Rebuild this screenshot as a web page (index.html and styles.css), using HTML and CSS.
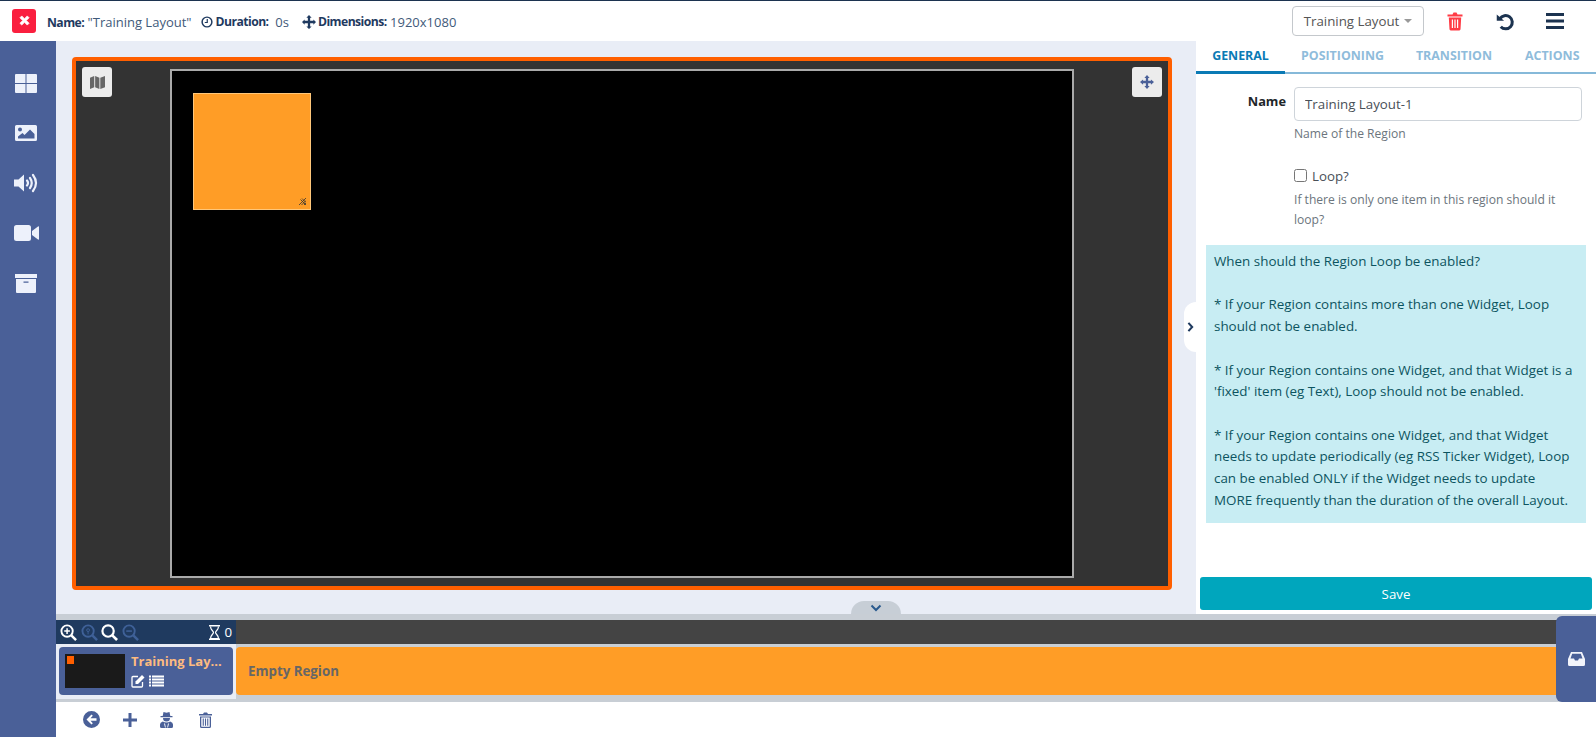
FILE: index.html
```html
<!DOCTYPE html>
<html lang="en">
<head>
<meta charset="utf-8">
<title>Layout Editor</title>
<link rel="stylesheet" href="styles.css">
</head>
<body>
<header class="topbar">
  <button class="close-btn" aria-label="Close"><svg viewBox="0 0 12 12" width="11" height="11"><path d="M3 1 6 4 9 1 11 3 8 6 11 9 9 11 6 8 3 11 1 9 4 6 1 3Z" fill="#fff" stroke="#fff" stroke-width=".8" stroke-linejoin="round"/></svg></button>
  <div class="meta">
    <span><b>Name:</b> "Training Layout"</span>
    <span class="meta-item"><svg class="mi" viewBox="0 0 14 14" width="12" height="12"><circle cx="7" cy="7" r="5.7" fill="none" stroke="#1f3a5f" stroke-width="1.7"/><path d="M7.3 3.5V7.6H4.4" fill="none" stroke="#1f3a5f" stroke-width="1.4"/></svg><b>Duration:</b>&nbsp; 0s</span>
    <span class="meta-item wide"><svg class="mi" viewBox="0 0 16 16" width="14" height="14"><path d="M8 0 11 3H9.300V6.700H13V5L16 8 13 11V9.300H9.300V13H11L8 16 5 13H6.700V9.300H3V11L0 8 3 5V6.700H6.700V3H5Z" fill="#1f3a5f"/></svg><b>Dimensions:</b> 1920x1080</span>
  </div>
  <div class="top-actions">
    <button class="select-btn">Training Layout <i class="caret"></i></button>
    <svg class="trash-top" viewBox="0 0 16 19" width="16" height="19"><path d="M5.500 2.500 6.500.5H9.500L10.500 2.500H15.500V4.500H.5V2.500ZM1.800 5.500H14.200L13.500 17.500 12.500 18.500H3.500L2.500 17.500ZM4.800 7.500V16H6V7.500ZM7.400 7.500V16H8.600V7.500ZM10 7.500V16H11.200V7.500Z" fill="#ff3b45" fill-rule="evenodd"/></svg>
    <svg class="undo" viewBox="0 0 20 20" width="19" height="19"><path d="M4.200 7A7 7 0 1 1 5 15.500" fill="none" stroke="#1c3350" stroke-width="3.200"/><path d="M.8 2.600 8.500 9.300H.8Z" fill="#1c3350"/></svg>
    <svg class="burger" viewBox="0 0 18 16" width="18" height="16"><path d="M0 0H18V3H0ZM0 6.500H18V9.500H0ZM0 13H18V16H0Z" fill="#1c3350"/></svg>
  </div>
</header>

<div class="shell">
  <nav class="sidebar">
    <span class="nav-slot"><svg viewBox="0 0 22 19" width="22" height="19"><path d="M0 1Q0 0 1 0H10.500V9H0ZM11.500 0H21Q22 0 22 1V9H11.500ZM0 10H10.500V19H1Q0 19 0 18ZM11.500 10H22V18Q22 19 21 19H11.500Z" fill="#edf1fb"/></svg></span>
    <span class="nav-slot"><svg viewBox="0 0 22 16" width="22" height="16"><path fill-rule="evenodd" d="M1.500 0H20.500Q22 0 22 1.500V14.500Q22 16 20.500 16H1.500Q0 16 0 14.500V1.500Q0 0 1.500 0ZM5 2.500A2 2 0 1 0 5 6.500 2 2 0 1 0 5 2.500ZM3 13.500H19.500V9L15 4.500 9.500 10 7.500 8 3 11.500Z" fill="#edf1fb"/></svg></span>
    <span class="nav-slot"><svg viewBox="0 0 25 20" width="25" height="20"><path d="M0 6.500H4.500L10 1.500V18.500L4.500 13.500H0Z" fill="#edf1fb"/><path d="M13 7.500Q15 10 13 12.500M16 5Q19.500 10 16 15M19 2Q25 10 19 18" fill="none" stroke="#edf1fb" stroke-width="2.200" stroke-linecap="round"/></svg></span>
    <span class="nav-slot"><svg viewBox="0 0 25 16" width="25" height="16"><path d="M2.500 0H14.500Q17 0 17 2.500V13.500Q17 16 14.500 16H2.500Q0 16 0 13.500V2.500Q0 0 2.500 0ZM18 6 24 1.500Q25 1 25 2V14Q25 15 24 14.500L18 10Z" fill="#edf1fb"/></svg></span>
    <span class="nav-slot"><svg viewBox="0 0 22 19" width="22" height="19"><path fill-rule="evenodd" d="M0 0H22V4H0ZM1 5H21V18Q21 19 20 19H2Q1 19 1 18ZM8.500 7.500V8.700H13.500V7.500Z" fill="#edf1fb"/></svg></span>
  </nav>

  <main class="workspace">
    <div class="upper">
      <section class="viewer">
        <div class="frame">
          <button class="tool tool-left" aria-label="Map"><svg viewBox="0 0 16 16" width="15" height="15"><path d="M0 3 4.500 1V13L0 15ZM5.500 1 10 3V15L5.500 13ZM11 3 16 1V13L11 15Z" fill="#666"/></svg></button>
          <button class="tool tool-right" aria-label="Move"><svg viewBox="0 0 16 16" width="14" height="14"><path d="M8 0 11 3.500H9.300V6.700H12.500V5L16 8 12.500 11V9.300H9.300V12.500H11L8 16 5 12.500H6.700V9.300H3.500V11L0 8 3.500 5V6.700H6.700V3.500H5Z" fill="#4a6098"/></svg></button>
          <div class="stage">
            <div class="region"><svg class="grip" viewBox="0 0 7 7" width="7" height="7"><path d="M0 7 7 0M2.500 7 7 2.500M5 7 7 5M1.500 1.500 7 7M3 .5 7 4.500" stroke="#333" stroke-width=".8"/></svg></div>
          </div>
        </div>
        <div class="collapse-down"><svg viewBox="0 0 12 8" width="12" height="8"><path d="M1.500 1.500 6 6 10.500 1.500" fill="none" stroke="#2a5a8e" stroke-width="2"/></svg></div>
      </section>

      <aside class="panel">
        <div class="panel-toggle"><svg viewBox="0 0 8 12" width="7" height="10"><path d="M1.500 1 6 6 1.500 11" fill="none" stroke="#1f3a5f" stroke-width="2.500"/></svg></div>
        <div class="tabs">
          <span class="tab active">GENERAL</span>
          <span class="tab">POSITIONING</span>
          <span class="tab">TRANSITION</span>
          <span class="tab">ACTIONS</span>
        </div>
        <div class="form">
          <div class="field">
            <label class="field-label">Name</label>
            <div class="field-body">
              <input class="text-input" type="text" value="Training Layout-1">
              <p class="hint">Name of the Region</p>
            </div>
          </div>
          <div class="field field-check">
            <div class="field-label"></div>
            <div class="field-body">
              <label class="check"><input type="checkbox"> Loop?</label>
              <p class="hint">If there is only one item in this region should it loop?</p>
            </div>
          </div>
          <div class="info">When should the Region Loop be enabled?<br><br>* If your Region contains more than one Widget, Loop should not be enabled.<br><br>* If your Region contains one Widget, and that Widget is a 'fixed' item (eg Text), Loop should not be enabled.<br><br>* If your Region contains one Widget, and that Widget needs to update periodically (eg RSS Ticker Widget), Loop can be enabled ONLY if the Widget needs to update MORE frequently than the duration of the overall Layout.</div>
        </div>
        <button class="save">Save</button>
      </aside>
    </div>

    <section class="timeline">
      <div class="ruler">
        <div class="zoom-tools">
          <svg viewBox="0 0 18 18" width="17" height="17"><circle cx="7.500" cy="7.500" r="6" fill="none" stroke="#fff" stroke-width="2"/><path d="M12 12 17 17" stroke="#fff" stroke-width="2.600"/><path d="M7.500 4.500V10.500M4.500 7.500H10.500" stroke="#fff" stroke-width="1.600"/></svg>
          <svg viewBox="0 0 18 18" width="17" height="17"><circle cx="7.500" cy="7.500" r="6" fill="none" stroke="#3f6198" stroke-width="2"/><path d="M12 12 17 17" stroke="#3f6198" stroke-width="2.600"/><circle cx="7.500" cy="6.500" r="1.500" fill="none" stroke="#3f6198"/><path d="M7.500 8V11" stroke="#3f6198"/></svg>
          <svg viewBox="0 0 18 18" width="17" height="17"><circle cx="7.500" cy="7.500" r="6" fill="none" stroke="#fff" stroke-width="2.300"/><path d="M12 12 17 17" stroke="#fff" stroke-width="2.800"/></svg>
          <svg viewBox="0 0 18 18" width="17" height="17"><circle cx="7.500" cy="7.500" r="6" fill="none" stroke="#3f6198" stroke-width="2"/><path d="M12 12 17 17" stroke="#3f6198" stroke-width="2.600"/><path d="M4.500 7.500H10.500" stroke="#3f6198" stroke-width="1.600"/></svg>
          <span class="count"><svg viewBox="0 0 12 15" width="13" height="15"><path d="M.5.800H11.500M.5 14.200H11.500" stroke="#fff" stroke-width="1.500"/><path d="M2 1.500C2 5 5 6 5 7.500S2 10 2 13.500H10C10 10 7 9 7 7.500S10 5 10 1.500" fill="none" stroke="#fff" stroke-width="1.200"/></svg><span>0</span></span>
        </div>
        <div class="ruler-fill"></div>
      </div>
      <div class="track">
        <div class="card-wrap">
          <div class="layout-card">
            <div class="thumb"><i></i></div>
            <div class="card-info">
              <div class="card-title">Training Lay...</div>
              <div class="card-icons">
                <svg viewBox="0 0 14 14" width="14" height="14"><path d="M11.500 8V12Q11.500 13 10.500 13H2Q1 13 1 12V3.500Q1 2.500 2 2.500H7" fill="none" stroke="#fff" stroke-width="1.300"/><path d="M4.500 7.500 11 1 13.500 3.500 7 10H4.500Z" fill="#fff"/></svg>
                <svg viewBox="0 0 15 12" width="15" height="12"><path d="M0 .5H2V2.500H0ZM3 .5H15V2.500H3ZM0 3.500H2V5.500H0ZM3 3.500H15V5.500H3ZM0 6.500H2V8.500H0ZM3 6.500H15V8.500H3ZM0 9.500H2V11.500H0ZM3 9.500H15V11.500H3Z" fill="#fff"/></svg>
              </div>
            </div>
          </div>
        </div>
        <div class="region-bar">Empty Region</div>
      </div>
      <button class="drawer" aria-label="Drawer"><svg viewBox="0 0 17 14" width="17" height="14"><path fill-rule="evenodd" d="M3 0H14L17 7V12.500Q17 14 15.500 14H1.500Q0 14 0 12.500V7ZM4.200 1.800 2.500 6.500H6L7 8.500H10L11 6.500H14.500L12.800 1.800Z" fill="#f2f4fb"/></svg></button>
    </section>

    <footer class="bottom">
      <svg viewBox="0 0 17 17" width="17" height="17"><path fill-rule="evenodd" d="M8.500 0A8.500 8.500 0 1 1 8.500 17 8.500 8.500 0 1 1 8.500 0ZM8.500 3.500 3.500 8.500 8.500 13.500 9.800 12.200 7.500 9.800H13.500V7.200H7.500L9.800 4.800Z" fill="#4a6098"/></svg>
      <svg viewBox="0 0 14 14" width="14" height="14"><path d="M5.500 0H8.500V5.500H14V8.500H8.500V14H5.500V8.500H0V5.500H5.500Z" fill="#4a6098"/></svg>
      <svg viewBox="0 0 13 16" width="13" height="16"><path fill-rule="evenodd" d="M3.500 0 6.500 .8 9.500 0 10.300 4H12.500V5.200H.5V4H2.700ZM3 6H10Q10 9.500 6.500 9.500T3 6ZM2.800 9.500Q4.500 10.500 6.500 10.500T10.200 9.500Q13 10.500 13 12.500V14.500Q13 16 11.500 16H1.500Q0 16 0 14.500V12.500Q0 10.500 2.800 9.500ZM4 11.500 5 15.500H5.800L5 11.500ZM8 11.500 7.200 15.500H8L9 11.500Z" fill="#4a6098"/></svg>
      <svg class="bottom-trash" viewBox="0 0 13 16" width="13" height="16"><path fill-rule="evenodd" d="M4 2 5 .5H8L9 2H13V3.500H0V2ZM1 4.500H12V14.500Q12 16 10.500 16H2.500Q1 16 1 14.500ZM2.300 5.500V14.700H10.700V5.500ZM3.700 6.500H4.800V13.700H3.700ZM5.950 6.500H7.050V13.700H5.950ZM8.200 6.500H9.300V13.700H8.200Z" fill="#4a6098"/></svg>
    </footer>
  </main>
</div>
</body>
</html>
```
FILE: styles.css
```css
* { box-sizing: border-box; }
html, body { margin: 0; height: 737px; overflow: hidden; }
body { font-family: "Open Sans", "Noto Sans", sans-serif; font-size: 13.3px; color: #212529; background: #fff; }
button { font-family: inherit; border: 0; padding: 0; }
svg { display: block; flex: none; }

.topbar { height: 41px; border-top: 1px solid #1c3350; display: flex; align-items: center; padding: 0 0 0 12px; background: #fff; }
.close-btn { width: 24px; height: 24px; border-radius: 3px; background: #fa1f3f; display: flex; align-items: center; justify-content: center; margin-bottom: 1px; }
.meta { display: flex; align-items: center; margin-left: 11px; color: #3f5a7a; font-size: 13px; margin-top: 1px; }
.meta b { color: #1f3a5f; font-weight: 700; font-size: 12.2px; letter-spacing: -.55px; }
.meta-item { display: flex; align-items: center; margin-left: 9px; white-space: pre; }
.meta-item.wide { margin-left: 13px; }
.mi { margin-right: 3px; }
.meta-item.wide .mi { margin-right: 2px; }
.top-actions { margin-left: auto; display: flex; align-items: center; padding-right: 32px; }
.select-btn { height: 30px; width: 132px; background: #fff; border: 1px solid #c4c8cc; border-radius: 4px; color: #555; font-size: 13.3px; display: flex; align-items: center; justify-content: center; gap: 5px; }
.caret { width: 0; height: 0; border-left: 4px solid transparent; border-right: 4px solid transparent; border-top: 4px solid #999; }
.trash-top { margin-left: 23px; }
.undo { margin-left: 33px; }
.burger { margin-left: 31px; }

.shell { display: flex; height: 696px; }
.sidebar { width: 56px; flex: none; background: #4a6098; display: flex; flex-direction: column; align-items: center; padding: 17px 4px 0 0; }
.nav-slot { height: 50px; display: flex; align-items: center; justify-content: center; }
.workspace { flex: 1; min-width: 0; display: flex; flex-direction: column; position: relative; }

.upper { display: flex; height: 573px; }
.viewer { width: 1140px; flex: none; background: #e9edf6; padding: 16px 24px 24px 16px; position: relative; }
.frame { height: 533px; width: 1100px; background: #333; border: 4px solid #ff5f00; border-radius: 4px; position: relative; padding: 8px 94px; }
.stage { height: 100%; background: #000; border: 2px solid #aaa; padding: 22px 21px; }
.region { width: 118px; height: 117px; background: #ff9d26; border: 1px solid #ffc77a; position: relative; }
.grip { position: absolute; right: 4px; bottom: 4px; }
.tool { position: absolute; top: 6px; width: 30px; height: 30px; border-radius: 3px; background: #ececec; display: flex; align-items: center; justify-content: center; }
.tool-left { left: 6px; }
.tool-right { right: 6px; }
.collapse-down { position: absolute; left: 795px; bottom: 0; width: 50px; height: 13px; background: #c7ced6; border-radius: 14px 14px 0 0; display: flex; justify-content: center; align-items: center; }

.panel { flex: 1; min-width: 0; position: relative; background: #fff; display: flex; flex-direction: column; }
.panel-toggle { position: absolute; left: -12px; top: 261px; width: 12px; height: 50px; background: #fff; border-radius: 14px 0 0 14px; display: flex; align-items: center; justify-content: center; }
.tabs { display: flex; height: 33px; border-bottom: 2px solid #86b9d9; color: #8fbcdb; font-weight: 700; font-size: 12.4px; }
.tab { width: 89px; margin-bottom: -2px; padding-top: 6px; text-align: center; border-bottom: 3px solid transparent; }
.tab:nth-child(2) { width: 115px; }
.tab:nth-child(3) { width: 108px; }
.tab:nth-child(4) { width: 88px; text-align: left; padding-left: 17px; }
.tab.active { color: #0a7ab5; border-bottom-color: #0a7ab5; }
.form { flex: 1; padding: 13px 10px 0; }
.field { display: flex; gap: 8px; }
.field-label { width: 80px; flex: none; text-align: right; font-weight: 700; font-size: 12.8px; padding-top: 5px; color: #212529; }
.field-body { flex: 1; min-width: 0; }
.text-input { width: 288px; height: 34px; border: 1px solid #ced4da; border-radius: 4px; padding: 0 10px; font: inherit; color: #495057; display: block; }
.hint { margin: 3px 0 0; color: #6c757d; font-size: 12.1px; line-height: 20px; max-width: 280px; }
.field-check { margin-top: 22px; }
.check { display: flex; align-items: center; gap: 5px; color: #495057; height: 19px; }
.check input { margin: 0; width: 13px; height: 13px; }
.field-check .hint { margin-top: 5px; }
.info { margin-top: 15px; background: #c8edf3; color: #0c5460; font-size: 13.4px; line-height: 21.700px; padding: 6px 10px 8px 8px; height: 278px; }
.save { margin: 0 4px 4px 4px; height: 33px; background: #00a6bd; color: #fff; border-radius: 3px; font-size: 13.3px; flex: none; }

.timeline { height: 88px; background: #c8ced5; padding-top: 6px; position: relative; }
.ruler { height: 24px; display: flex; }
.zoom-tools { width: 180px; background: #1f3a5f; display: flex; align-items: center; gap: 3.500px; padding: 0 4px; }
.count { margin-left: auto; display: flex; align-items: center; gap: 3px; color: #fff; font-size: 13.3px; }
.ruler-fill { flex: 1; background: #444; }
.track { display: flex; height: 58px; }
.card-wrap { width: 180px; height: 55px; background: #e9edf6; padding: 3px; }
.layout-card { height: 48px; border-radius: 4px; background: #4a6098; display: flex; padding: 7px 6px; gap: 6px; }
.thumb { width: 60px; height: 34px; background: #1a1a1a; position: relative; flex: none; }
.thumb i { position: absolute; left: 2px; top: 2px; width: 7px; height: 8px; background: #ff5f00; }
.card-title { font-weight: 700; font-size: 13px; color: #fdbb80; white-space: nowrap; line-height: 14px; }
.card-icons { display: flex; gap: 4px; margin-top: 6px; align-items: center; }
.region-bar { flex: 1; margin-top: 3px; height: 48px; background: #ff9d26; border-radius: 4px; color: #666; font-weight: 700; font-size: 13.3px; display: flex; align-items: center; padding-left: 12px; }
.drawer { position: absolute; right: 0; top: 2px; width: 40px; height: 86px; background: #4a6098; border-radius: 6px 0 0 6px; display: flex; align-items: center; justify-content: center; }
.bottom { flex: 1; display: flex; align-items: center; padding-left: 27px; gap: 23px; background: #fff; }
.bottom-trash { margin-left: 3px; }
```
